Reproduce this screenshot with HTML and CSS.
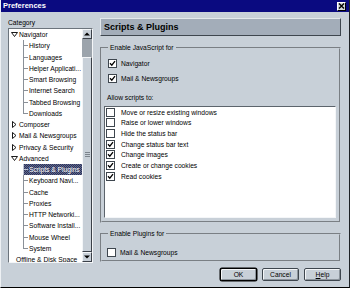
FILE: index.html
```html
<!DOCTYPE html>
<html>
<head>
<meta charset="utf-8">
<title>Preferences</title>
<link rel="stylesheet" href="styles.css">
</head>
<body>
<div class="window">
  <div class="titlebar">
    <span class="title">Preferences</span>
    <span class="close"><svg width="7" height="6" viewBox="0 0 7 6"><path d="M1 0.5 L6 5.5 M6 0.5 L1 5.5" stroke="#000" stroke-width="1.4" fill="none"/></svg></span>
  </div>
  <div class="main">
    <div class="left">
      <div class="cat-label">Category</div>
      <div class="tree">
        <div class="tree-rows">
          <div class="row top"><svg class="twisty" width="7" height="5" viewBox="0 0 7 5"><path d="M0.5 0.5 H6.5 L3.5 4.5 Z" fill="#fff" stroke="#000" stroke-width="0.9"/></svg><span class="lbl">Navigator</span></div>
          <div class="row child"><span class="item"><span class="conn"></span><span class="lbl">History</span></span></div>
          <div class="row child"><span class="item"><span class="conn"></span><span class="lbl">Languages</span></span></div>
          <div class="row child"><span class="item"><span class="conn"></span><span class="lbl">Helper Applicati...</span></span></div>
          <div class="row child"><span class="item"><span class="conn"></span><span class="lbl">Smart Browsing</span></span></div>
          <div class="row child"><span class="item"><span class="conn"></span><span class="lbl">Internet Search</span></span></div>
          <div class="row child"><span class="item"><span class="conn"></span><span class="lbl">Tabbed Browsing</span></span></div>
          <div class="row child last"><span class="item"><span class="conn"></span><span class="lbl">Downloads</span></span></div>
          <div class="row top"><svg class="twisty" width="7" height="7" viewBox="0 0 7 7"><path d="M1.5 0.5 V6.5 L5 3.5 Z" fill="#fff" stroke="#000" stroke-width="0.9"/></svg><span class="lbl">Composer</span></div>
          <div class="row top"><svg class="twisty" width="7" height="7" viewBox="0 0 7 7"><path d="M1.5 0.5 V6.5 L5 3.5 Z" fill="#fff" stroke="#000" stroke-width="0.9"/></svg><span class="lbl">Mail &amp; Newsgroups</span></div>
          <div class="row top"><svg class="twisty" width="7" height="7" viewBox="0 0 7 7"><path d="M1.5 0.5 V6.5 L5 3.5 Z" fill="#fff" stroke="#000" stroke-width="0.9"/></svg><span class="lbl">Privacy &amp; Security</span></div>
          <div class="row top"><svg class="twisty" width="7" height="5" viewBox="0 0 7 5"><path d="M0.5 0.5 H6.5 L3.5 4.5 Z" fill="#fff" stroke="#000" stroke-width="0.9"/></svg><span class="lbl">Advanced</span></div>
          <div class="row child selected"><span class="item"><span class="conn"></span><span class="lbl">Scripts &amp; Plugins</span></span></div>
          <div class="row child"><span class="item"><span class="conn"></span><span class="lbl">Keyboard Navi...</span></span></div>
          <div class="row child"><span class="item"><span class="conn"></span><span class="lbl">Cache</span></span></div>
          <div class="row child"><span class="item"><span class="conn"></span><span class="lbl">Proxies</span></span></div>
          <div class="row child"><span class="item"><span class="conn"></span><span class="lbl">HTTP Networki...</span></span></div>
          <div class="row child"><span class="item"><span class="conn"></span><span class="lbl">Software Install...</span></span></div>
          <div class="row child"><span class="item"><span class="conn"></span><span class="lbl">Mouse Wheel</span></span></div>
          <div class="row child last"><span class="item"><span class="conn"></span><span class="lbl">System</span></span></div>
          <div class="row top leaf"><span class="lbl">Offline &amp; Disk Space</span></div>
        </div>
        <div class="vscroll">
          <div class="sb-btn"><svg width="6" height="4" viewBox="0 0 6 4"><path d="M0 3.5 H6 L3 0.5 Z" fill="#000"/></svg></div>
          <div class="sb-track"></div>
          <div class="sb-thumb"><span class="grip"></span></div>
          <div class="sb-btn"><svg width="6" height="4" viewBox="0 0 6 4"><path d="M0 0.5 H6 L3 3.5 Z" fill="#000"/></svg></div>
        </div>
      </div>
    </div>
    <div class="right">
      <div class="header">Scripts &amp; Plugins</div>
      <fieldset class="group js">
        <legend>Enable JavaScript for</legend>
        <div class="check-row"><span class="cb"><svg width="7" height="7" viewBox="0 0 7 7"><path d="M1 3.3 L2.8 5.2 L6 1.2" stroke="#000" stroke-width="1.3" fill="none"/></svg></span><span>Navigator</span></div>
        <div class="check-row"><span class="cb"><svg width="7" height="7" viewBox="0 0 7 7"><path d="M1 3.3 L2.8 5.2 L6 1.2" stroke="#000" stroke-width="1.3" fill="none"/></svg></span><span>Mail &amp; Newsgroups</span></div>
        <div class="allow-label">Allow scripts to:</div>
        <div class="list">
          <div class="list-row"><span class="cb"></span><span>Move or resize existing windows</span></div>
          <div class="list-row"><span class="cb"></span><span>Raise or lower windows</span></div>
          <div class="list-row"><span class="cb"></span><span>Hide the status bar</span></div>
          <div class="list-row"><span class="cb"><svg width="7" height="7" viewBox="0 0 7 7"><path d="M1 3.3 L2.8 5.2 L6 1.2" stroke="#000" stroke-width="1.3" fill="none"/></svg></span><span>Change status bar text</span></div>
          <div class="list-row"><span class="cb"><svg width="7" height="7" viewBox="0 0 7 7"><path d="M1 3.3 L2.8 5.2 L6 1.2" stroke="#000" stroke-width="1.3" fill="none"/></svg></span><span>Change images</span></div>
          <div class="list-row"><span class="cb"><svg width="7" height="7" viewBox="0 0 7 7"><path d="M1 3.3 L2.8 5.2 L6 1.2" stroke="#000" stroke-width="1.3" fill="none"/></svg></span><span>Create or change cookies</span></div>
          <div class="list-row"><span class="cb"><svg width="7" height="7" viewBox="0 0 7 7"><path d="M1 3.3 L2.8 5.2 L6 1.2" stroke="#000" stroke-width="1.3" fill="none"/></svg></span><span>Read cookies</span></div>
        </div>
      </fieldset>
      <fieldset class="group plugins">
        <legend>Enable Plugins for</legend>
        <div class="check-row"><span class="cb"></span><span>Mail &amp; Newsgroups</span></div>
      </fieldset>
      <div class="buttons">
        <button class="btn default">OK</button>
        <button class="btn">Cancel</button>
        <button class="btn"><u>H</u>elp</button>
      </div>
    </div>
  </div>
</div>
</body>
</html>
```

FILE: styles.css
```css
* { box-sizing: border-box; }
html, body { margin: 0; padding: 0; }
body {
  width: 350px;
  height: 288px;
  overflow: hidden;
  font-family: "Liberation Sans", Arial, sans-serif;
  font-size: 6.7px;
  color: #000;
  background: #c8d0d8;
}
.window {
  width: 350px;
  height: 288px;
  display: flex;
  flex-direction: column;
  background: #c8d0d8;
  border-left: 1px solid #eef1f4;
  border-right: 1px solid #1e2226;
  border-bottom: 1px solid #000;
}
.titlebar {
  height: 12px;
  flex: none;
  background: #0a0a80;
  display: flex;
  align-items: center;
  justify-content: space-between;
  padding: 0 3px 0 2px;
}
.title {
  color: #fff;
  font-weight: bold;
  font-size: 7.5px;
  line-height: 12px;
}
.close {
  width: 9px;
  height: 9px;
  background: #d4d8dc;
  border: 1px solid;
  border-color: #fff #000 #000 #fff;
  display: flex;
  align-items: center;
  justify-content: center;
}
.close svg { display: block; }
.main {
  flex: 1;
  min-height: 0;
  display: flex;
  gap: 7px;
  padding: 6px 8px 0 7px;
}
.left {
  width: 85px;
  flex: none;
  display: flex;
  flex-direction: column;
}
.cat-label {
  line-height: 10px;
  height: 10px;
}
.tree {
  height: 235px;
  display: flex;
  background: #fff;
  border: 1px solid;
  border-color: #6c747c #f4f6f8 #f4f6f8 #6c747c;
}
.tree-rows {
  flex: 1;
  min-width: 0;
  overflow: hidden;
}
.row {
  height: 11.25px;
  display: flex;
  align-items: center;
  white-space: nowrap;
}
.row .lbl { line-height: 11.25px; }
.row.top { padding-left: 2px; }
.row.leaf { padding-left: 7px; }
.twisty { display: block; flex: none; margin-right: 1px; }
.row.child { align-items: stretch; padding-left: 14px; }
.item {
  flex: 1;
  display: flex;
  align-items: stretch;
  height: 100%;
}
.conn {
  width: 6px;
  flex: none;
  background:
    linear-gradient(#8a9098, #8a9098) no-repeat 0 0 / 1px 100%,
    linear-gradient(#8a9098, #8a9098) no-repeat 0 50% / 5px 1px;
}
.row.last .conn {
  background:
    linear-gradient(#8a9098, #8a9098) no-repeat 0 0 / 1px 50%,
    linear-gradient(#8a9098, #8a9098) no-repeat 0 50% / 5px 1px;
}
.row.selected .item {
  background: repeating-conic-gradient(#2c325a 0 25%, #626a8c 0 50%) 0 0 / 2px 2px;
  color: #fff;
}
.row.selected .conn {
  background:
    linear-gradient(#c0c6d4, #c0c6d4) no-repeat 0 0 / 1px 100%,
    linear-gradient(#c0c6d4, #c0c6d4) no-repeat 0 50% / 5px 1px;
}
.vscroll {
  width: 10px;
  flex: none;
  display: flex;
  flex-direction: column;
}
.sb-btn {
  height: 10px;
  flex: none;
  background: #c8d0d8;
  border: 1px solid;
  border-color: #f4f6f8 #3a4048 #3a4048 #f4f6f8;
  display: flex;
  align-items: center;
  justify-content: center;
}
.sb-btn svg { display: block; }
.sb-track {
  height: 18px;
  flex: none;
  background: #9ca4ac;
}
.sb-thumb {
  flex: 1;
  background: #c8d0d8;
  border: 1px solid;
  border-color: #f4f6f8 #3a4048 #3a4048 #f4f6f8;
  display: flex;
  align-items: center;
  justify-content: center;
}
.grip {
  width: 5px;
  height: 5px;
  background: repeating-linear-gradient(#7c848c 0 1px, transparent 1px 2px);
}
.right {
  width: 241px;
  flex: none;
  display: flex;
  flex-direction: column;
}
.header {
  height: 18px;
  flex: none;
  background: #a3adb9;
  border: 1px solid;
  border-color: #e4e8ec #3e464e #3e464e #e4e8ec;
  font-weight: bold;
  font-size: 9px;
  line-height: 16px;
  padding-left: 3px;
}
.group {
  margin: 0;
  min-width: 0;
  border: 2px groove #c8d0d8;
  padding: 2.5px 3px 3px 2px;
}
.group legend {
  padding: 0 2px;
  margin-left: 4px;
  line-height: 10px;
  font-size: 6.7px;
}
.js { margin-top: 7px; }
.plugins { margin-top: 6px; padding-top: 5.5px; padding-bottom: 0; }
.check-row {
  height: 15px;
  display: flex;
  align-items: center;
  gap: 4px;
  padding-left: 4px;
}
.plugins .check-row { padding-left: 3px; }
.cb {
  width: 9px;
  height: 9px;
  flex: none;
  background: #fff;
  border: 1px solid #3e464e;
  display: flex;
  align-items: center;
  justify-content: center;
}
.cb svg { display: block; }
.allow-label {
  margin-top: 7.5px;
  line-height: 10px;
  padding-left: 3px;
}
.list {
  margin-top: 3px;
  height: 112px;
  background: #fff;
  border: 1px solid;
  border-color: #5c646c #f4f6f8 #f4f6f8 #5c646c;
}
.list-row {
  height: 10.67px;
  display: flex;
  align-items: center;
  gap: 6px;
  padding-left: 1px;
  white-space: nowrap;
}
.buttons {
  margin-top: 6px;
  display: flex;
  justify-content: flex-end;
  gap: 5px;
}
.btn {
  width: 37px;
  height: 13px;
  padding: 0;
  margin: 0;
  font-family: "Liberation Sans", Arial, sans-serif;
  font-size: 6.7px;
  color: #000;
  background: #c8d0d8;
  border: 1px solid #3e464e;
  border-radius: 2px;
  box-shadow: inset 1px 1px 0 #f4f6f8, inset -1px -1px 0 #8c949c;
}
.btn.default {
  border: 1px solid #000;
  box-shadow: 0 0 0 0.5px #000, inset 1px 1px 0 #f4f6f8, inset -1px -1px 0 #8c949c;
}
```
